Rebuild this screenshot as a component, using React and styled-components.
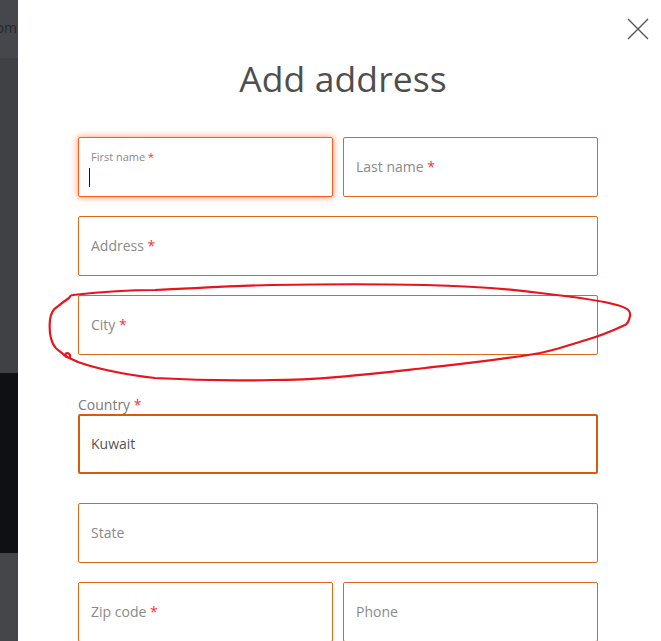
import styled, { createGlobalStyle } from "styled-components";

const GlobalStyle = createGlobalStyle`
    html, body {
        margin: 0;
        padding: 0;
        background: #ffffff;
        font-family: "Open Sans", "Liberation Sans", sans-serif;
    }
`;

const App = () => {
    return (
        <>
            <GlobalStyle />
            <Page>
                <Backdrop>
                    <BackdropHeader>
                        <HeaderText>Custom</HeaderText>
                    </BackdropHeader>
                    <BackdropBlock tone="#404145" size="314px" />
                    <BackdropBlock tone="#0f1013" size="180px" />
                    <BackdropBlock tone="#45464a" size="auto" />
                </Backdrop>
                <Modal>
                    <CloseButton aria-label="Close">
                        <svg width="22" height="22" viewBox="0 0 22 22">
                            <path d="M1 1 L21 21 M21 1 L1 21" stroke="#555" strokeWidth="1.4" fill="none" />
                        </svg>
                    </CloseButton>
                    <Title>Add address</Title>
                    <Form>
                        <Row>
                            <Field focused>
                                <SmallLabel>First name <Req>*</Req></SmallLabel>
                                <Caret />
                            </Field>
                            <Field>
                                <Placeholder>Last name <Req>*</Req></Placeholder>
                            </Field>
                        </Row>
                        <Field>
                            <Placeholder>Address <Req>*</Req></Placeholder>
                        </Field>
                        <Field>
                            <Placeholder>City <Req>*</Req></Placeholder>
                        </Field>
                        <Group>
                            <GroupLabel>Country <Req>*</Req></GroupLabel>
                            <Field strong>
                                <Value>Kuwait</Value>
                            </Field>
                        </Group>
                        <Field>
                            <Placeholder>State</Placeholder>
                        </Field>
                        <Row>
                            <Field>
                                <Placeholder>Zip code <Req>*</Req></Placeholder>
                            </Field>
                            <Field>
                                <Placeholder>Phone</Placeholder>
                            </Field>
                        </Row>
                    </Form>
                    <Scribble width="661" height="641" viewBox="0 0 661 641">
                        <path
                            d="M73 295 C100 292 130 290 155 290 C200 288 230 286 271 285 C330 284 380 284 425 285 C470 286 510 289 540 293 C575 297 600 300 617 305 C628 308 631 311 630 316 C629 321 627 324 625 325 C610 332 600 336 586 340 C570 345 555 350 540 353 C500 360 460 364 425 368 C370 374 320 380 271 380 C230 381 190 380 155 378 C120 374 95 368 78 362 C72 359 68 358 66 356 C64 353 68 352 70 355 C71 358 68 359 64 355 C60 351 57 350 55 347 C50 340 49 330 50 320 C51 313 53 309 57 307 C62 303 66 300 69 298 C70 296 72 295 73 295 Z"
                            stroke="#e8141c"
                            strokeWidth="2.2"
                            fill="none"
                            strokeLinejoin="round"
                        />
                    </Scribble>
                </Modal>
            </Page>
        </>
    );
};

const Page = styled.div`
    display: flex;
    width: 661px;
    height: 641px;
    overflow: hidden;
`;

const Backdrop = styled.div`
    width: 18px;
    flex-shrink: 0;
    display: flex;
    flex-direction: column;
    background: #45464a;
    overflow: hidden;
`;

const BackdropHeader = styled.div`
    position: relative;
    height: 58px;
    flex-shrink: 0;
    background: #46474c;
    border-bottom: 1px solid #3e3f43;
    overflow: hidden;
`;

const HeaderText = styled.span`
    position: absolute;
    right: 1px;
    top: 18px;
    white-space: nowrap;
    font-size: 14px;
    line-height: 20px;
    color: #26272a;
`;

const BackdropBlock = styled.div`
    height: ${(p) => p.size};
    flex: ${(p) => (p.size === "auto" ? "1" : "none")};
    background: ${(p) => p.tone};
`;

const Modal = styled.div`
    position: relative;
    flex: 1;
    background: #ffffff;
    padding: 54px 63px 0 60px;
    box-sizing: border-box;
`;

const CloseButton = styled.button`
    position: absolute;
    top: 18px;
    right: 12px;
    width: 22px;
    height: 22px;
    padding: 0;
    border: none;
    background: transparent;
    display: flex;
    cursor: pointer;
`;

const Title = styled.h1`
    margin: 0 -10px 35px 0;
    height: 48px;
    line-height: 48px;
    text-align: center;
    font-size: 35.5px;
    font-weight: 400;
    color: #4e4e4e;
    letter-spacing: 0.1px;
`;

const Form = styled.div`
    display: flex;
    flex-direction: column;
    gap: 19px;
`;

const Row = styled.div`
    display: grid;
    grid-template-columns: 1fr 1fr;
    gap: 10px;
`;

const Field = styled.div`
    height: 60px;
    box-sizing: border-box;
    border: ${(p) => (p.strong ? "2px solid #d95a0a" : p.focused ? "1px solid #ff5a1a" : "1px solid #e0661c")};
    border-radius: 2px;
    box-shadow: ${(p) => (p.focused ? "0 0 6px 1px rgba(255, 100, 40, 0.55)" : "none")};
    background: #fff;
    display: flex;
    flex-direction: column;
    justify-content: center;
    padding: 0 ${(p) => (p.strong ? "11px" : "12px")};
`;

const Placeholder = styled.div`
    font-size: 14px;
    color: #8a8a8a;
    line-height: 18px;
`;

const SmallLabel = styled.div`
    font-size: 11px;
    line-height: 14px;
    color: #8a8a8a;
    margin-top: 0;
`;

const Caret = styled.div`
    width: 1px;
    height: 19px;
    background: #111;
    margin: 4px 0 -2px -2px;
`;

const Value = styled.div`
    font-size: 14px;
    line-height: 18px;
    color: #555;
`;

const Req = styled.span`
    color: #f2333a;
`;

const Group = styled.div`
    display: flex;
    flex-direction: column;
    margin: 22px 0 10px;
`;

const GroupLabel = styled.div`
    font-size: 14px;
    line-height: 18px;
    color: #7a7a7a;
`;

const Scribble = styled.svg`
    position: absolute;
    left: -18px;
    top: 0;
    pointer-events: none;
`;

export default App;
